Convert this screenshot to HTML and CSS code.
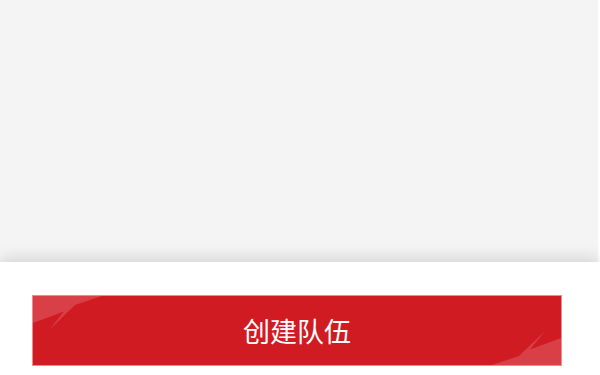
FILE: index.html
```html
<!DOCTYPE html>
<html lang="zh-CN">
<head>
<meta charset="utf-8">
<link rel="stylesheet" href="styles.css">
</head>
<body>
<div class="page">
  <main class="content"></main>
  <footer class="footer">
    <button class="create-btn" type="button">
      <svg class="gloss gloss-tl" width="70" height="35" viewBox="0 0 70 35"><polygon points="0,0 69,0 42,9 16,34 31,15.5 0,27" /></svg>
      <svg class="gloss gloss-br" width="70" height="35" viewBox="0 0 70 35"><polygon points="70,35 1,35 28,26 54,1 39,19.5 70,8" /></svg>
      <span class="label">创建队伍</span>
    </button>
  </footer>
</div>
</body>
</html>
```
FILE: styles.css
```css
html, body {
  margin: 0;
  padding: 0;
  width: 600px;
  height: 375px;
  overflow: hidden;
  background: #ffffff;
  font-family: "Noto Sans CJK SC", "Noto Sans", sans-serif;
}
.page {
  display: flex;
  flex-direction: column;
  height: 375px;
}
.content {
  height: 262px;
  width: 598px;
  background: #f4f4f4;
}
.footer {
  flex: 1;
  background: #ffffff;
  box-shadow: 0 -4px 14px rgba(0, 0, 0, 0.13);
  padding: 33px 38px 0 32px;
  position: relative;
  z-index: 1;
}
.create-btn {
  position: relative;
  display: flex;
  align-items: center;
  justify-content: center;
  width: 530px;
  height: 71px;
  margin: 0;
  padding: 0;
  background: #d11b23;
  border: 1px solid #ea8d91;
  box-sizing: border-box;
  color: #ffffff;
  font-family: "Noto Sans CJK SC", "Noto Sans", sans-serif;
  font-size: 27px;
  font-weight: 400;
  overflow: hidden;
}
.gloss {
  position: absolute;
  fill: rgba(255, 255, 255, 0.16);
}
.gloss-tl { left: 0; top: 0; }
.gloss-br { right: 0; bottom: 0; }
.label {
  position: relative;
  line-height: 1;
}
```
